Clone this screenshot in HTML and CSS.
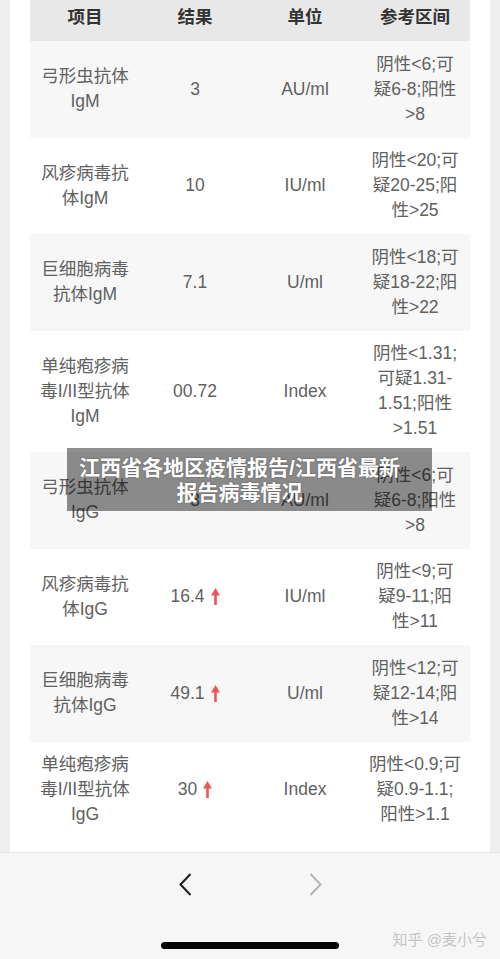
FILE: index.html
```
<!DOCTYPE html>
<html lang="zh-CN">
<head>
<meta charset="utf-8">
<title>检测报告</title>
<link rel="stylesheet" href="styles.css">
</head>
<body>
<div class="page">
  <div class="card">
    <div class="table">
      <div class="row head">
        <div class="cell">项目</div><div class="cell">结果</div><div class="cell">单位</div><div class="cell">参考区间</div>
      </div>
      <div class="row alt">
        <div class="cell">弓形虫抗体<br>IgM</div><div class="cell">3</div><div class="cell">AU/ml</div><div class="cell">阴性&lt;6;可<br>疑6-8;阳性<br>&gt;8</div>
      </div>
      <div class="row">
        <div class="cell">风疹病毒抗<br>体IgM</div><div class="cell">10</div><div class="cell">IU/ml</div><div class="cell">阴性&lt;20;可<br>疑20-25;阳<br>性&gt;25</div>
      </div>
      <div class="row alt">
        <div class="cell">巨细胞病毒<br>抗体IgM</div><div class="cell">7.1</div><div class="cell">U/ml</div><div class="cell">阴性&lt;18;可<br>疑18-22;阳<br>性&gt;22</div>
      </div>
      <div class="row">
        <div class="cell">单纯疱疹病<br>毒I/II型抗体<br>IgM</div><div class="cell">00.72</div><div class="cell">Index</div><div class="cell">阴性&lt;1.31;<br>可疑1.31-<br>1.51;阳性<br>&gt;1.51</div>
      </div>
      <div class="row alt">
        <div class="cell">弓形虫抗体<br>IgG</div><div class="cell">3</div><div class="cell">AU/ml</div><div class="cell">阴性&lt;6;可<br>疑6-8;阳性<br>&gt;8</div>
      </div>
      <div class="row">
        <div class="cell">风疹病毒抗<br>体IgG</div><div class="cell">16.4<svg class="up" viewBox="0 0 9 17"><path d="M4.5 0 L9 7.5 L5.8 7.5 L5.8 17 L3.2 17 L3.2 7.5 L0 7.5 Z"/></svg></div><div class="cell">IU/ml</div><div class="cell">阴性&lt;9;可<br>疑9-11;阳<br>性&gt;11</div>
      </div>
      <div class="row alt">
        <div class="cell">巨细胞病毒<br>抗体IgG</div><div class="cell">49.1<svg class="up" viewBox="0 0 9 17"><path d="M4.5 0 L9 7.5 L5.8 7.5 L5.8 17 L3.2 17 L3.2 7.5 L0 7.5 Z"/></svg></div><div class="cell">U/ml</div><div class="cell">阴性&lt;12;可<br>疑12-14;阳<br>性&gt;14</div>
      </div>
      <div class="row">
        <div class="cell">单纯疱疹病<br>毒I/II型抗体<br>IgG</div><div class="cell">30<svg class="up" viewBox="0 0 9 17"><path d="M4.5 0 L9 7.5 L5.8 7.5 L5.8 17 L3.2 17 L3.2 7.5 L0 7.5 Z"/></svg></div><div class="cell">Index</div><div class="cell">阴性&lt;0.9;可<br>疑0.9-1.1;<br>阳性&gt;1.1</div>
      </div>
    </div>
  </div>
  <div class="bar">
    <div class="nav">
      <svg class="chev" viewBox="0 0 13 23"><polyline points="11.5,1 1.5,11.5 11.5,22" fill="none" stroke="#1c1c1c" stroke-width="2"/></svg>
      <svg class="chev" viewBox="0 0 13 23"><polyline points="1.5,1 11.5,11.5 1.5,22" fill="none" stroke="#b4b4b4" stroke-width="2"/></svg>
    </div>
    <div class="home"></div>
    <div class="mark">知乎 @麦小兮</div>
  </div>
  <div class="banner">江西省各地区疫情报告/江西省最新<br>报告病毒情况</div>
</div>
</body>
</html>
```

FILE: styles.css
```
html, body {
  margin: 0;
  padding: 0;
}
body {
  background: #efefef;
  font-family: "Liberation Sans", "Noto Sans CJK SC", sans-serif;
  color: #616161;
}
.page {
  position: relative;
  width: 500px;
  height: 959px;
  overflow: hidden;
}
.card {
  margin: 0 10px;
  background: #fff;
  padding: 0 20px 14px;
}
.table {
  display: flex;
  flex-direction: column;
}
.row {
  display: grid;
  grid-template-columns: repeat(4, 110px);
  padding: 10.75px 0;
  font-size: 17.5px;
  line-height: 25px;
}
.row.alt {
  background: #f7f7f7;
}
.row.head {
  background: #e8e8e8;
  padding: 5px 0 11px;
  font-weight: bold;
  color: #333;
}
.cell {
  display: flex;
  align-items: center;
  justify-content: center;
  text-align: center;
  white-space: nowrap;
}
.up {
  width: 9px;
  height: 17px;
  margin-left: 6px;
  fill: #f05454;
}
.bar {
  position: relative;
  height: 106px;
  background: #f6f6f6;
  border-top: 1px solid #e6e6e6;
  display: flex;
  flex-direction: column;
  align-items: center;
}
.nav {
  display: flex;
  gap: 117px;
  margin-top: 20px;
}
.chev {
  width: 13px;
  height: 23px;
}
.home {
  width: 178px;
  height: 7px;
  border-radius: 4px;
  background: #000;
  margin-top: 46px;
}
.mark {
  position: absolute;
  right: 13px;
  top: 75px;
  font-size: 15px;
  color: #c4c4c4;
  text-shadow: 0 0 1px #fff;
}
.banner {
  position: absolute;
  left: 67px;
  top: 448px;
  width: 365px;
  box-sizing: border-box;
  padding: 6.5px 30px 6.5px 10px;
  background: rgba(0, 0, 0, 0.44);
  color: #fff;
  font-weight: bold;
  font-size: 21px;
  line-height: 25px;
  text-align: center;
  white-space: nowrap;
  text-shadow: 0 0 2px rgba(0, 0, 0, 0.4);
}
```
